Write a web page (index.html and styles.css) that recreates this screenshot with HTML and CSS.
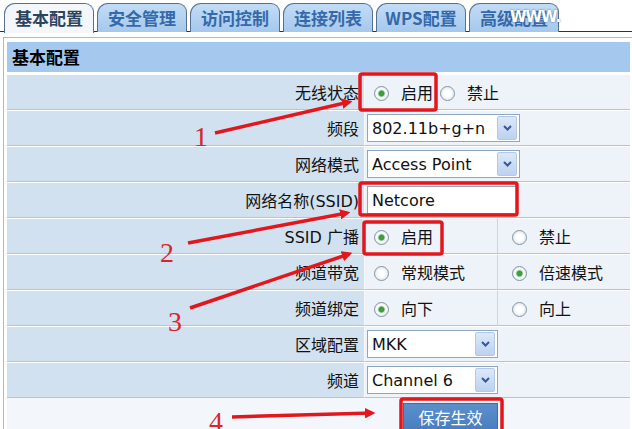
FILE: index.html
```html
<!DOCTYPE html>
<html lang="zh-CN">
<head>
    <meta charset="UTF-8">
    <title>基本配置</title>
    <link rel="stylesheet" href="styles.css">
</head>
<body>
    <!-- 顶部标签 -->
    <div class="tabs">
        <div class="tab active">基本配置</div>
        <div class="tab">安全管理</div>
        <div class="tab">访问控制</div>
        <div class="tab">连接列表</div>
        <div class="tab">WPS配置</div>
        <div class="tab">高级配置<span class="wm">WWW.</span></div>
    </div>

    <div class="panel">
        <div class="panel-title">基本配置</div>
        <table class="form">
            <colgroup><col class="c-label"><col class="c-mid"><col></colgroup>
            <tr>
                <td class="label">无线状态</td>
                <td class="val" colspan="2"><span class="radio on"></span>启用<span class="radio"></span>禁止</td>
            </tr>
            <tr>
                <td class="label">频段</td>
                <td class="val" colspan="2">
                    <div class="select wide"><span>802.11b+g+n</span><span class="drop"><svg width="9" height="6" viewBox="0 0 9 6"><path d="M1 1 L4.5 4.5 L8 1" fill="none" stroke="#34589a" stroke-width="2"/></svg></span></div>
                </td>
            </tr>
            <tr>
                <td class="label">网络模式</td>
                <td class="val" colspan="2">
                    <div class="select wide"><span>Access Point</span><span class="drop"><svg width="9" height="6" viewBox="0 0 9 6"><path d="M1 1 L4.5 4.5 L8 1" fill="none" stroke="#34589a" stroke-width="2"/></svg></span></div>
                </td>
            </tr>
            <tr>
                <td class="label">网络名称(SSID)</td>
                <td class="val" colspan="2"><div class="input">Netcore</div></td>
            </tr>
            <tr>
                <td class="label">SSID 广播</td>
                <td class="val"><span class="radio on"></span>启用</td>
                <td class="val split"><span class="radio"></span>禁止</td>
            </tr>
            <tr>
                <td class="label">频道带宽</td>
                <td class="val"><span class="radio"></span>常规模式</td>
                <td class="val split"><span class="radio on"></span>倍速模式</td>
            </tr>
            <tr>
                <td class="label">频道绑定</td>
                <td class="val"><span class="radio on"></span>向下</td>
                <td class="val split"><span class="radio"></span>向上</td>
            </tr>
            <tr>
                <td class="label">区域配置</td>
                <td class="val" colspan="2">
                    <div class="select"><span>MKK</span><span class="drop"><svg width="9" height="6" viewBox="0 0 9 6"><path d="M1 1 L4.5 4.5 L8 1" fill="none" stroke="#34589a" stroke-width="2"/></svg></span></div>
                </td>
            </tr>
            <tr>
                <td class="label">频道</td>
                <td class="val" colspan="2">
                    <div class="select"><span>Channel 6</span><span class="drop"><svg width="9" height="6" viewBox="0 0 9 6"><path d="M1 1 L4.5 4.5 L8 1" fill="none" stroke="#34589a" stroke-width="2"/></svg></span></div>
                </td>
            </tr>
            <tr>
                <td class="save-row" colspan="3"><button class="save">保存生效</button></td>
            </tr>
        </table>
    </div>

    <!-- 红色标注 -->
    <svg class="marks" width="632" height="429" viewBox="0 0 632 429">
        <defs>
            <marker id="ah" markerWidth="3" markerHeight="3" refX="2" refY="1.5" orient="auto">
                <path d="M0 0 L3 1.5 L0 3 z" fill="#e2171d"/>
            </marker>
        </defs>
        <g fill="none" stroke="#e2171d" stroke-width="3.5">
            <rect x="360" y="74" width="76" height="36" rx="2"/>
            <rect x="360" y="183" width="157" height="32" rx="2"/>
            <rect x="364" y="222" width="78" height="32" rx="2"/>
            <rect x="401" y="399" width="101" height="40" rx="2"/>
            <line x1="215" y1="133" x2="349" y2="102" marker-end="url(#ah)"/>
            <line x1="188" y1="243" x2="347" y2="213" marker-end="url(#ah)"/>
            <line x1="190" y1="308" x2="349" y2="254" marker-end="url(#ah)"/>
            <line x1="232" y1="417" x2="372" y2="413" marker-end="url(#ah)"/>
        </g>
        <g class="num">
            <text x="194" y="146">1</text>
            <text x="160" y="262">2</text>
            <text x="168" y="331">3</text>
            <text x="209" y="431">4</text>
        </g>
    </svg>
</body>
</html>
```

FILE: styles.css
```css
body {
    margin: 0;
    width: 632px;
    height: 429px;
    overflow: hidden;
    position: relative;
    background: #fff;
    font-family: "DejaVu Sans", "Noto Sans CJK SC", sans-serif;
    font-size: 16px;
    color: #111;
}

/* 标签栏 */
.tabs {
    display: flex;
    gap: 3px;
    height: 32px;
    padding: 3px 0 0 4px;
    box-sizing: border-box;
    border-bottom: 1px solid #2a3440;
}
.tab {
    position: relative;
    width: 90px;
    height: 29px;
    box-sizing: border-box;
    border: 1px solid #56718f;
    border-bottom: none;
    border-radius: 11px 9px 0 0;
    background: linear-gradient(#c2dcf6, #a6c8ec);
    color: #3569aa;
    font-family: "Noto Sans CJK SC", sans-serif;
    font-weight: bold;
    font-size: 17px;
    line-height: 27px;
    text-align: center;
    white-space: nowrap;
}
.tab.active {
    height: 30px;
    margin-bottom: -1px;
    background: #f3f7fb;
    color: #2c4360;
}
/* 截图上的水印 */
.wm {
    position: absolute;
    left: 40px;
    top: 0;
    color: #fff;
    font-family: "DejaVu Sans", sans-serif;
    font-size: 15px;
    letter-spacing: -1px;
    text-shadow: 0 0 2px #3c5f88;
}

/* 面板 */
.panel {
    margin: 5px 0 0 3px;
    width: 623px;
    border: 1px solid #a9bccf;
    padding: 4px 3px 0 3px;
}
.panel-title {
    height: 30px;
    line-height: 30px;
    padding-left: 5px;
    background: #a5c9ee;
    font-family: "Noto Sans CJK SC", sans-serif;
    font-weight: bold;
    font-size: 17px;
    color: #000;
    margin-bottom: 2px;
}

.form {
    width: 623px;
    table-layout: fixed;
    border-collapse: separate;
    border-spacing: 0;
}
.c-label { width: 357px; }
.c-mid { width: 133px; }
.form td {
    height: 34px;
    padding: 0;
    border-top: 1px solid #fff;
    border-bottom: 1px solid #b6c5d3;
    vertical-align: middle;
    white-space: nowrap;
}
.form td.label {
    background: #d1e1f0;
    text-align: right;
    padding-right: 5px;
}
.form td.val {
    background: #edf3f9;
    padding-left: 2px;
    border-left: 1px solid #f4f8fb;
}
.form td.split {
    padding-left: 7px;
    border-left: 1px solid #c9d5e0;
}

/* 单选 */
.radio {
    display: inline-block;
    width: 13px;
    height: 13px;
    margin: 0 12px 0 7px;
    border: 1px solid #8593a3;
    border-radius: 50%;
    background: radial-gradient(circle, #fff 0 3px, #e3e9ef 7px);
    vertical-align: -2px;
}
.radio.on {
    background: radial-gradient(circle, #3e9e3e 0 2.5px, #cfe8cf 3.5px, #fff 4.5px, #e3e9ef 7px);
}

/* 下拉框 */
.select {
    display: flex;
    align-items: center;
    justify-content: space-between;
    width: 131px;
    height: 28px;
    box-sizing: border-box;
    border: 1px solid #8ea7c0;
    background: #fff;
}
.select.wide { width: 153px; }
.select span:first-child { padding-left: 4px; }
.drop {
    display: flex;
    align-items: center;
    justify-content: center;
    width: 18px;
    height: 22px;
    margin-right: 2px;
    border: 1px solid #b4c9e6;
    border-radius: 2px;
    background: linear-gradient(#dce8f8, #bcd2f0);
}
.input {
    width: 150px;
    height: 28px;
    line-height: 28px;
    box-sizing: border-box;
    border: 1px solid #8ea7c0;
    background: #fff;
    padding-left: 4px;
}

/* 保存 */
.form td.save-row {
    background: #f3f7fb;
    border-top: none;
    border-bottom: none;
    padding: 5px 0 0 396px;
    vertical-align: top;
}
.save {
    width: 95px;
    height: 27px;
    border: 1px solid #3c6da8;
    background: linear-gradient(#5b8fcc, #4a7fbf);
    color: #fff;
    font-family: "Noto Sans CJK SC", sans-serif;
    font-size: 16px;
    padding: 0;
}

.marks {
    position: absolute;
    left: 0;
    top: 0;
    pointer-events: none;
}
.num text {
    font-family: "Liberation Serif", serif;
    font-size: 28px;
    fill: #d8262a;
}
```
